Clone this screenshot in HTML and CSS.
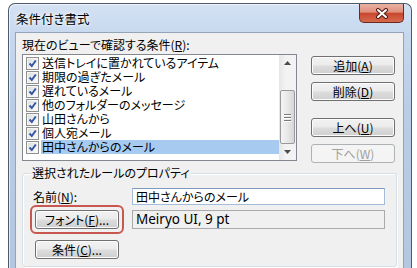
FILE: index.html
```html
<!DOCTYPE html>
<html lang="ja">
<head>
<meta charset="UTF-8">
<title>条件付き書式</title>
<link rel="stylesheet" href="styles.css">
</head>
<body>

<div class="window">
    <div class="titlebar">
        <div class="title">条件付き書式</div>
        <div class="close">
            <svg width="14" height="11" viewBox="0 0 14 11">
                <path d="M3 2 L11 9 M11 2 L3 9" stroke="#4a1a12" stroke-width="4" stroke-linecap="round"/>
                <path d="M3 2 L11 9 M11 2 L3 9" stroke="#fff" stroke-width="2" stroke-linecap="round"/>
            </svg>
        </div>
    </div>

    <div class="client">
        <div class="caption">現在のビューで確認する条件(<u>R</u>):</div>

        <div class="main">
            <div class="listbox">
                <div class="items">
                    <div class="item"><span class="cb"><svg viewBox="0 0 9 9"><path d="M1.5 4.5 L3.8 7 L7.8 1.5"/></svg></span><span class="txt">送信トレイに置かれているアイテム</span></div>
                    <div class="item"><span class="cb"><svg viewBox="0 0 9 9"><path d="M1.5 4.5 L3.8 7 L7.8 1.5"/></svg></span><span class="txt">期限の過ぎたメール</span></div>
                    <div class="item"><span class="cb"><svg viewBox="0 0 9 9"><path d="M1.5 4.5 L3.8 7 L7.8 1.5"/></svg></span><span class="txt">遅れているメール</span></div>
                    <div class="item"><span class="cb"><svg viewBox="0 0 9 9"><path d="M1.5 4.5 L3.8 7 L7.8 1.5"/></svg></span><span class="txt">他のフォルダーのメッセージ</span></div>
                    <div class="item"><span class="cb"><svg viewBox="0 0 9 9"><path d="M1.5 4.5 L3.8 7 L7.8 1.5"/></svg></span><span class="txt">山田さんから</span></div>
                    <div class="item"><span class="cb"><svg viewBox="0 0 9 9"><path d="M1.5 4.5 L3.8 7 L7.8 1.5"/></svg></span><span class="txt">個人宛メール</span></div>
                    <div class="item selected"><span class="cb"><svg viewBox="0 0 9 9"><path d="M1.5 4.5 L3.8 7 L7.8 1.5"/></svg></span><span class="txt">田中さんからのメール</span></div>
                </div>
                <div class="scrollbar">
                    <div class="arrow"><svg width="7" height="4" viewBox="0 0 7 4"><path d="M0 4 L3.5 0 L7 4 Z" fill="#4b4b4b"/></svg></div>
                    <div class="track">
                        <div class="thumb">
                            <span class="grip"></span>
                            <span class="grip"></span>
                            <span class="grip"></span>
                        </div>
                    </div>
                    <div class="arrow"><svg width="7" height="4" viewBox="0 0 7 4"><path d="M0 0 L7 0 L3.5 4 Z" fill="#4b4b4b"/></svg></div>
                </div>
            </div>

            <div class="buttons">
                <button class="btn">追加(<u>A</u>)</button>
                <button class="btn">削除(<u>D</u>)</button>
                <button class="btn gap">上へ(<u>U</u>)</button>
                <button class="btn" disabled>下へ(<u>W</u>)</button>
            </div>
        </div>

        <div class="group">
            <div class="legend">選択されたルールのプロパティ</div>
            <div class="props">
                <div class="name-label">名前(<u>N</u>):</div>
                <div class="textbox">田中さんからのメール</div>

                <div class="mark">
                    <button class="btn">フォント(<u>F</u>)...</button>
                    <div class="highlight"></div>
                </div>
                <div class="fontbox">Meiryo UI, 9 pt</div>

                <button class="btn cond">条件(<u>C</u>)...</button>
            </div>
        </div>
    </div>
</div>

</body>
</html>
```

FILE: styles.css
```css
body {
    margin: 0;
    background: #ffffff;
    font-family: "Noto Sans CJK JP", "Noto Sans", sans-serif;
    font-size: 12px;
    line-height: 14px;
    font-feature-settings: "palt";
    color: #000;
    overflow: hidden;
    height: 268px;
}

u {
    text-decoration: underline;
    text-underline-offset: 1px;
}

.window {
    margin: 3px 0 0 8px;
    width: 404px;
    height: 265px;
    box-sizing: border-box;
    border: 1px solid #4c5a6c;
    border-bottom: none;
    border-radius: 7px 7px 0 0;
    padding: 0 7px 0 6px;
    background: linear-gradient(180deg, #d3e1f3 0%, #c7d8ee 12%, #b9cde6 40%, #b3c7df 100%);
    box-shadow: inset 1px 1px 0 rgba(255, 255, 255, 0.6);
}

.titlebar {
    display: flex;
    justify-content: space-between;
    align-items: flex-start;
    height: 28px;
}

.title {
    margin-top: 7px;
    padding-left: 1px;
    font-size: 12.5px;
    line-height: 16px;
    text-shadow: 0 0 6px #fff, 0 0 3px #fff;
}

.close {
    width: 45px;
    height: 19px;
    box-sizing: border-box;
    border: 1px solid #6a2a20;
    border-top: none;
    border-radius: 0 0 5px 5px;
    background: linear-gradient(180deg, #eab2a5 0%, #df8f7c 45%, #c9472f 52%, #d56a4c 100%);
    display: flex;
    align-items: center;
    justify-content: center;
}

.client {
    height: 236px;
    background: #f0f0f0;
    border: 1px solid #93a4b8;
    border-bottom: none;
    padding: 0 6px;
}

.caption {
    padding-top: 5px;
}

.main {
    display: flex;
    align-items: flex-start;
    margin-top: 2px;
}

.listbox {
    display: flex;
    width: 275px;
    height: 107px;
    box-sizing: border-box;
    border: 1px solid #828790;
    background: #fff;
}

.items {
    flex: 1;
    padding-top: 1px;
}

.item {
    display: flex;
    align-items: center;
    height: 14px;
    padding-left: 3px;
}

.cb {
    width: 13px;
    height: 13px;
    box-sizing: border-box;
    border: 1px solid #8e8f8f;
    background: linear-gradient(135deg, #dcdcdc 0%, #f4f4f4 70%, #ffffff 100%);
    box-shadow: inset 0 0 0 1px #f6f6f6;
    display: flex;
    align-items: center;
    justify-content: center;
}

.cb svg {
    width: 9px;
    height: 9px;
    fill: none;
    stroke: #3656a6;
    stroke-width: 2;
}

.txt {
    margin-left: 2px;
    padding-left: 1px;
    height: 14px;
}

.selected .txt {
    flex: 1;
    background: #a7cbf0;
}

.scrollbar {
    width: 17px;
    display: flex;
    flex-direction: column;
    background: linear-gradient(90deg, #e6e6e6 0%, #f3f3f3 40%, #f3f3f3 100%);
}

.arrow {
    height: 17px;
    display: flex;
    align-items: center;
    justify-content: center;
}

.track {
    flex: 1;
    padding-top: 19px;
}

.thumb {
    height: 54px;
    margin: 0 1px;
    box-sizing: border-box;
    border: 1px solid #9a9a9a;
    border-radius: 2px;
    background: linear-gradient(90deg, #f4f4f4 0%, #e8e8e8 50%, #d6d6d6 100%);
    display: flex;
    flex-direction: column;
    align-items: center;
    justify-content: center;
    gap: 2px;
}

.grip {
    width: 7px;
    height: 1px;
    background: #7a7a7a;
    box-shadow: 0 1px 0 #fff;
}

.buttons {
    display: flex;
    flex-direction: column;
    gap: 7px;
    margin-left: 14px;
    padding-top: 2px;
}

.btn {
    width: 84px;
    height: 19px;
    padding: 0;
    border: 1px solid #707070;
    border-radius: 3px;
    background: linear-gradient(180deg, #f2f2f2 0%, #ebebeb 48%, #dddddd 52%, #cfcfcf 100%);
    box-shadow: inset 0 0 0 1px #fcfcfc;
    font-family: inherit;
    font-size: 12px;
    line-height: 14px;
    font-feature-settings: "palt";
    color: #000;
}

.btn.gap {
    margin-top: 10px;
}

.btn:disabled {
    color: #a0a0a0;
    border-color: #adb2b5;
    background: #f4f4f4;
    box-shadow: none;
}

.group {
    margin-top: 10px;
    height: 92px;
    border: 1px solid #d5dfe5;
    border-radius: 3px;
    box-shadow: inset 1px 1px 0 #fff, 1px 1px 0 #fff;
}

.legend {
    width: fit-content;
    margin: -8px 0 0 8px;
    padding: 0 1px;
    background: #f0f0f0;
}

.props {
    display: grid;
    grid-template-columns: 97px 253px;
    row-gap: 5px;
    margin-top: 8px;
    padding-left: 12px;
}

.name-label {
    margin-left: -2px;
    line-height: 17px;
}

.textbox {
    height: 17px;
    box-sizing: border-box;
    border: 1px solid #a4bcd8;
    border-top-color: #7e9bbd;
    background: #fff;
    padding-left: 3px;
    line-height: 15px;
}

.mark {
    position: relative;
}

.highlight {
    position: absolute;
    left: -5px;
    top: -5px;
    width: 94px;
    height: 29px;
    box-sizing: border-box;
    border: 2px solid #c8584f;
    border-radius: 6px;
}

.fontbox {
    height: 19px;
    box-sizing: border-box;
    border: 1px solid #a9a9a9;
    background: #f0f0f0;
    padding-left: 3px;
    font-family: "Noto Sans", sans-serif;
    font-size: 13.5px;
    line-height: 17px;
}

.cond {
    margin-top: 6px;
}
```
